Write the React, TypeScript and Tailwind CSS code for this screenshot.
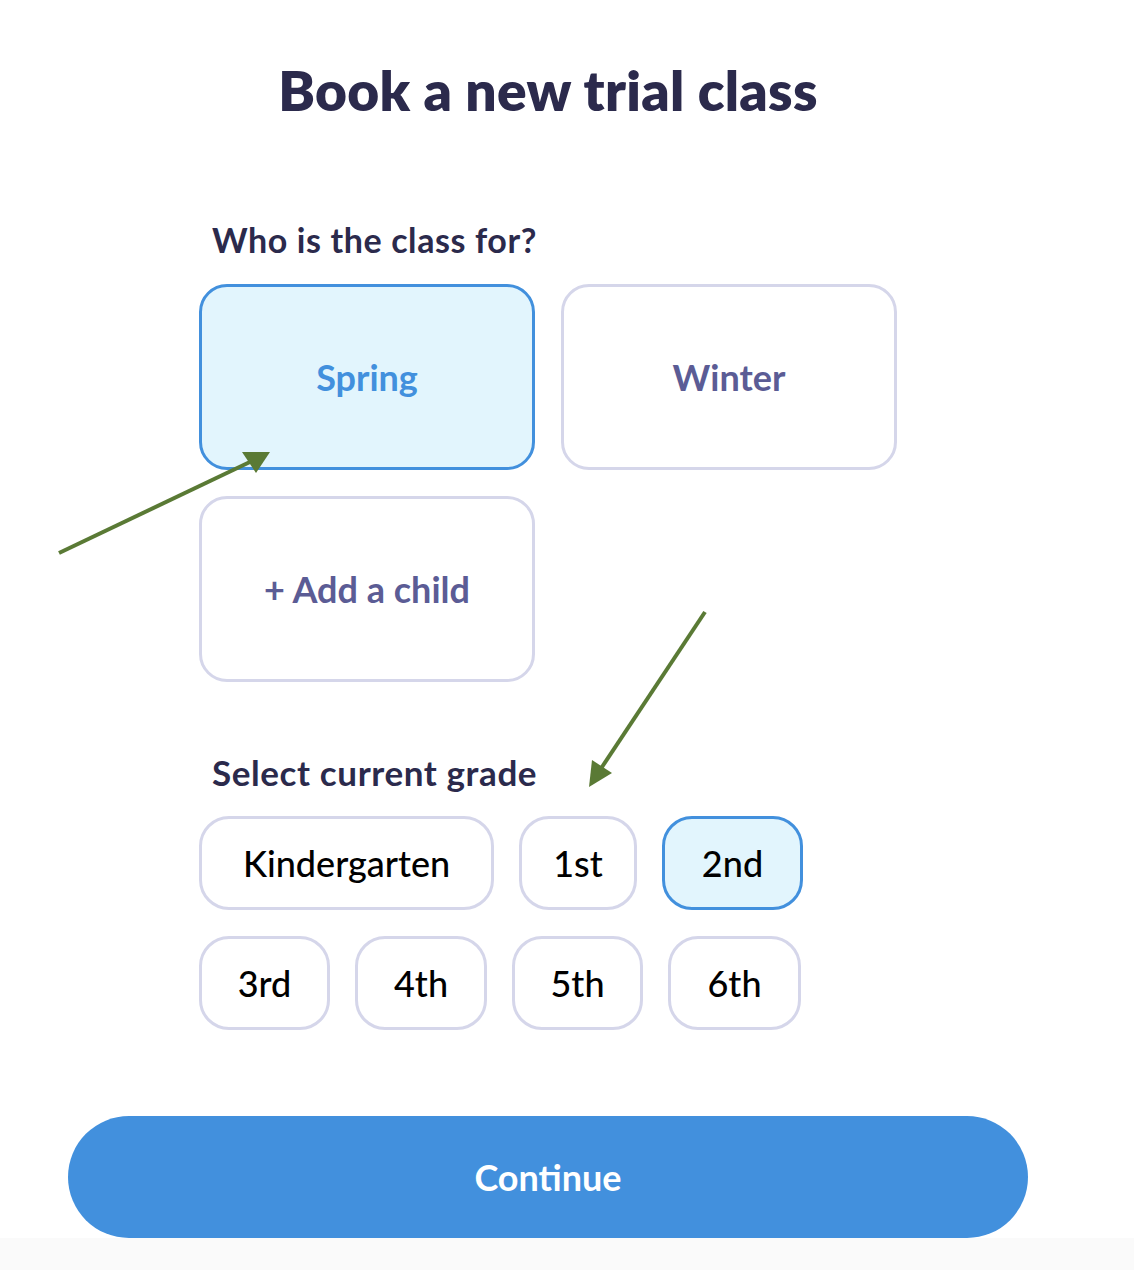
import React from "react";

const grades1 = [
  { label: "Kindergarten", w: "w-[295px]" },
  { label: "1st", w: "w-[118px]" },
  { label: "2nd", w: "w-[141px]" },
];
const grades2 = [
  { label: "3rd", w: "w-[131px]" },
  { label: "4th", w: "w-[132px]" },
  { label: "5th", w: "w-[131px]" },
  { label: "6th", w: "w-[133px]" },
];

function GradeButton({ label, w, active }: { label: string; w: string; active?: boolean }) {
  return (
    <button
      className={
        (active
          ? "h-[94px] rounded-[30px] border-[3px] border-[#4290dd] bg-[#e2f5fd] text-[36px] font-medium text-black "
          : "h-[94px] rounded-[30px] border-[3px] border-[#d5d6ea] bg-white text-[36px] font-medium text-black ") + w
      }
    >
      {label}
    </button>
  );
}

function ChildCard({ label, active }: { label: string; active?: boolean }) {
  return (
    <button
      className={
        active
          ? "w-[336px] h-[186px] rounded-[28px] border-[3px] border-[#4290dd] bg-[#e2f5fd] text-[36px] font-bold text-[#4290dd]"
          : "w-[336px] h-[186px] rounded-[28px] border-[3px] border-[#d5d6ea] bg-white text-[36px] font-bold text-[#5b5c95]"
      }
    >
      {label}
    </button>
  );
}

export default function App() {
  return (
    <main className="relative w-[1134px] h-[1270px] bg-white font-['Lato',sans-serif] overflow-hidden">
      <div className="w-[1096px] px-[68px] pt-[58px]">
        <h1 className="text-center text-[55px] leading-[64px] font-extrabold tracking-[0.3px] text-[#2b2a4c]">
          Book a new trial class
        </h1>

        <div className="pl-[131px] pt-[98px]">
          <h2 className="pl-[13px] text-[34px] leading-[40px] font-bold tracking-[0.6px] text-[#2b2a4c]">Who is the class for?</h2>
          <div className="mt-[24px] grid grid-cols-[336px_336px] gap-[26px]">
            <ChildCard label="Spring" active />
            <ChildCard label="Winter" />
            <ChildCard label="+ Add a child" />
          </div>

          <h2 className="mt-[70px] pl-[13px] text-[35px] leading-[40px] font-bold tracking-[0.6px] text-[#2b2a4c]">Select current grade</h2>
          <div className="mt-[24px] flex gap-[25px]">
            {grades1.map((g) => (
              <GradeButton key={g.label} label={g.label} w={g.w} active={g.label === "2nd"} />
            ))}
          </div>
          <div className="mt-[26px] flex gap-[25px]">
            {grades2.map((g) => (
              <GradeButton key={g.label} label={g.label} w={g.w} />
            ))}
          </div>
        </div>

        <button className="mt-[86px] w-full h-[122px] rounded-full bg-[#4290dd] text-white text-[36px] font-bold">
          Continue
        </button>
      </div>
      <div className="h-[40px] bg-[#fafafa]" />

      {/* annotation arrows */}
      <svg className="absolute inset-0 pointer-events-none" width="1134" height="1270">
        <line x1="59" y1="553" x2="252" y2="461" stroke="#5a7a35" strokeWidth="4" />
        <polygon points="270,452 242,452 256,473" fill="#5a7a35" />
        <line x1="705" y1="612" x2="600" y2="770" stroke="#5a7a35" strokeWidth="4" />
        <polygon points="589,787 592,760 612,773" fill="#5a7a35" />
      </svg>
    </main>
  );
}
